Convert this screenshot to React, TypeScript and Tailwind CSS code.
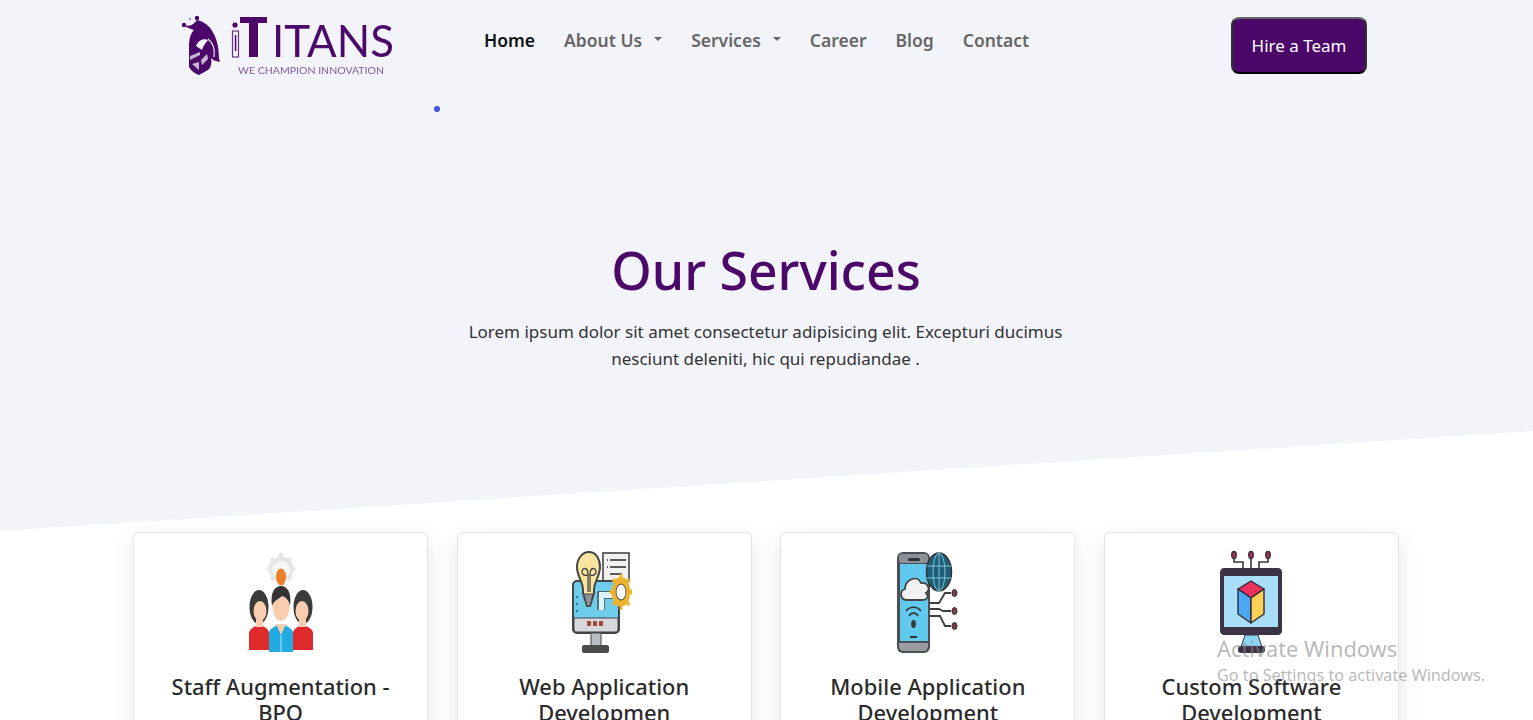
const font = "font-['Noto_Sans','Open_Sans',sans-serif]";

function Logo() {
  return (
    <svg viewBox="180 12 216 66" className="w-[216px] h-[66px] blur-[0.3px]">
      <g fill="#4b0869">
        <circle cx="184" cy="25" r="2.2" />
        <circle cx="197" cy="18" r="2.2" />
        <circle cx="190" cy="19" r="1.2" fill="#a98bbb" />
        <path d="M184 25 C190 27 193 25 197 20 C208 22 219 34 219 58 C219 60 220 61 220 62 C215 61 213 60 211 58 C212 62 211 68 208 70 L199 75 C196 74 192 72 189 67 L189 48 C189 40 190 34 194 30 C191 29 187 28 184 25 Z" />
      </g>
      <path d="M196 46 C198 41 203 38 208 40 C205 43 203 47 202 50 Z" fill="#f2f4fa" />
      <path d="M190 56 L200 52 L200 55 L190 60 Z M201 60 L207 54 L208 59 L202 65 Z M192 64 L199 62 L199 70 Z" fill="#c9b6d6" />
      <path d="M208 39 C213 43 215 50 214 57" fill="none" stroke="#f2f4fa" strokeWidth="1.2" />
      <circle cx="235" cy="25" r="2.6" fill="#4b0869" />
      <rect x="232.500" y="31" width="6" height="26" fill="none" stroke="#6b2e87" strokeWidth="1.2" />
      <rect x="234.800" y="35" width="1.500" height="16" fill="#4b0869" />
      <path d="M240 17 H267 V23 H258 V57 H249 V23 H240 Z" fill="#4b0869" />
      <text x="272" y="57" fontFamily="Lato,'Liberation Sans',sans-serif" fontSize="44" fontWeight="400" fill="#4b0869" textLength="122" lengthAdjust="spacingAndGlyphs">ITANS</text>
      <text x="238" y="74" fontFamily="Lato,'Noto Sans',sans-serif" fontSize="9.500" fill="#8559a0" textLength="146" lengthAdjust="spacingAndGlyphs">WE CHAMPION INNOVATION</text>
    </svg>
  );
}

function StaffIcon() {
  return (
    <svg viewBox="0 0 100 120" className="w-[100px] h-[120px] blur-[0.4px]">
      <circle cx="50" cy="29" r="12.500" fill="#e6e6e6" />
      <g stroke="#e6e6e6" strokeWidth="4.500">
        <path d="M50 13V45M36 29H64M40 18L60 40M60 18L40 40" />
      </g>
      <circle cx="50" cy="30" r="9" fill="#f6f6f6" />
      <ellipse cx="50" cy="37" rx="5" ry="8.500" fill="#ee7f2d" />
      <path d="M18 110 V92 C20 88 24 86 28 85 C33 86 36 88 38 92 V110 Z" fill="#e02a2c" />
      <path d="M62 110 V92 C64 88 67 86 72 85 C76 86 80 88 82 92 V110 Z" fill="#e02a2c" />
      <ellipse cx="28" cy="67" rx="9.500" ry="17" fill="#3a3a3a" />
      <ellipse cx="72" cy="67" rx="9.500" ry="17" fill="#3a3a3a" />
      <ellipse cx="29" cy="71" rx="6.500" ry="10" fill="#fbcdb0" />
      <ellipse cx="71" cy="71" rx="6.500" ry="10" fill="#fbcdb0" />
      <rect x="25" y="79" width="7" height="8" fill="#fbcdb0" />
      <rect x="68" y="79" width="7" height="8" fill="#fbcdb0" />
      <path d="M38 112 V92 C40 88 44 86 50 84 C56 86 60 88 62 92 V112 Z" fill="#22abe3" />
      <path d="M45 84 L50 95 L55 84 Z" fill="#fbcdb0" />
      <path d="M50 95 V112" stroke="#7fd4f2" strokeWidth="1.500" />
      <ellipse cx="50" cy="66" rx="8.500" ry="15" fill="#fbcdb0" />
      <path d="M41 66 C39 52 44 46 50 46 C56 46 61 52 59 66 C58 60 55 57 51 56 C48 59 43 60 41 66 Z" fill="#333" />
    </svg>
  );
}

function WebIcon() {
  return (
    <svg viewBox="0 0 100 120" className="w-[100px] h-[120px] blur-[0.4px]">
      <rect x="49" y="13" width="26" height="28" fill="#f2f2f2" stroke="#5a5a5a" strokeWidth="1.800" />
      <path d="M56 20H72M53 20H54M56 27H72M53 27H54M56 34H68" stroke="#5a5a5a" strokeWidth="1.800" />
      <rect x="19" y="41" width="46" height="52" rx="4" fill="#6fcdec" stroke="#444" strokeWidth="2" />
      <path d="M20 78H64V89C64 91 63 92 61 92H23C21 92 20 91 20 89Z" fill="#d6d8dc" stroke="#444" strokeWidth="1" />
      <rect x="33" y="81" width="4" height="5" fill="#a8453f" />
      <rect x="39" y="81" width="4" height="5" fill="#a8453f" />
      <rect x="45" y="81" width="4" height="5" fill="#a8453f" />
      <circle cx="23" cy="57" r="1.200" fill="#2c7a96" />
      <circle cx="23" cy="64" r="1.200" fill="#2c7a96" />
      <circle cx="23" cy="71" r="1.200" fill="#2c7a96" />
      <rect x="37" y="93" width="10" height="13" fill="#b9bcc2" stroke="#444" />
      <rect x="28" y="105" width="27" height="8" rx="2" fill="#4b4b4b" />
      <path d="M44 70 V52 H62 M50 70 V58 H62" fill="none" stroke="#444" strokeWidth="1.300" />
      <path d="M45 52 H62 V58 H50 V70 H45 Z" fill="#dff3fa" />
      <path d="M35 12 C42 12 46 19 46 27 C46 36 40 42 40 50 L40 53 L36 66 L33 66 L29 53 L29 50 C29 42 23 36 23 27 C23 19 28 12 35 12 Z" fill="#f9e4a0" stroke="#444" strokeWidth="2" />
      <path d="M30 54 H39 L36 66 H33 Z" fill="#8f9398" stroke="#444" />
      <path d="M34 52 V34 C34 27 28 27 28 32 C28 36 34 36 34 34 M36 52 V34 C36 27 42 27 42 32 C42 36 36 36 36 34" fill="none" stroke="#444" strokeWidth="1.300" />
      <g transform="translate(67 52) scale(0.62 1)">
        <circle r="15" fill="#eeb32e" />
        <g stroke="#eeb32e" strokeWidth="4.500">
          <path d="M0 -18V18M-18 0H18M-13 -13L13 13M13 -13L-13 13" />
        </g>
        <circle r="8" fill="#ffffff" stroke="#444" strokeWidth="1.200" />
      </g>
    </svg>
  );
}

function MobileIcon() {
  return (
    <svg viewBox="0 0 100 120" className="w-[100px] h-[120px] blur-[0.4px]">
      <rect x="19" y="12" width="33" height="101" rx="6" fill="#4c4f55" />
      <rect x="21" y="14" width="29" height="9" rx="3" fill="#8d9197" />
      <rect x="30" y="18" width="12" height="3" rx="1.500" fill="#2f3136" />
      <rect x="22" y="24" width="28" height="77" fill="#62c9ee" />
      <path d="M21 103H50V106C50 109 48 111 46 111H25C23 111 21 109 21 106Z" fill="#9a9ca1" />
      <path d="M29 60 C22 60 21 51 27 49 C27 40 39 34 43 43 C50 42 53 50 48 53 C52 57 48 60 45 60 Z" fill="#f2f2f4" stroke="#444" strokeWidth="1.800" />
      <path d="M28 71 C32 66 39 66 43 71 M31 76 C33 72 38 72 40 76" fill="none" stroke="#333" strokeWidth="1.600" />
      <ellipse cx="35.500" cy="84" rx="2.400" ry="4" fill="#3a3a3a" />
      <rect x="32" y="96" width="7" height="2" fill="#333" />
      <ellipse cx="61" cy="32" rx="12.500" ry="19" fill="#1f5f78" stroke="#333" strokeWidth="1.500" />
      <ellipse cx="61" cy="32" rx="6" ry="19" fill="none" stroke="#7ec3d9" />
      <path d="M61 13V51M49 26H73M49 38H73" stroke="#7ec3d9" />
      <g fill="none" stroke="#3d3d3d" strokeWidth="1.800">
        <path d="M52 63H61L67 53H73" />
        <path d="M52 69H61L65 71H73" />
        <path d="M52 76H62L67 86H73" />
      </g>
      <ellipse cx="76.500" cy="53" rx="2.500" ry="3.500" fill="#7a3b46" stroke="#333" />
      <ellipse cx="76.500" cy="71" rx="2.500" ry="3.500" fill="#7a3b46" stroke="#333" />
      <ellipse cx="76.500" cy="86" rx="2.500" ry="3.500" fill="#7a3b46" stroke="#333" />
    </svg>
  );
}

function SoftwareIcon() {
  return (
    <svg viewBox="0 0 100 120" className="w-[100px] h-[120px] blur-[0.4px]">
      <g fill="none" stroke="#3b3246" strokeWidth="1.600">
        <path d="M33 16V22H42V44" />
        <path d="M50 16V40" />
        <path d="M67 16V22H58V44" />
      </g>
      <ellipse cx="33" cy="15" rx="2.300" ry="3.500" fill="#a8324f" stroke="#3b3246" strokeWidth="1.300" />
      <ellipse cx="50" cy="15" rx="2.300" ry="3.500" fill="#a8324f" stroke="#3b3246" strokeWidth="1.300" />
      <ellipse cx="67" cy="15" rx="2.300" ry="3.500" fill="#a8324f" stroke="#3b3246" strokeWidth="1.300" />
      <path d="M19 32C19 30 21 28 23 28H77C79 28 81 30 81 32V91C81 93 79 95 77 95H23C21 95 19 93 19 91Z" fill="#3b3246" />
      <rect x="23" y="36" width="54" height="51" fill="#a9def8" />
      <path d="M44 95H57L61 107H40Z" fill="#8fd3f2" stroke="#3b3246" />
      <rect x="37" y="106" width="27" height="7" rx="3" fill="#3b3246" />
      <g stroke="#2f2a38" strokeWidth="1.400" strokeLinejoin="round">
        <path d="M50 41L63 49L50 58L37 49Z" fill="#e8325a" />
        <path d="M37 49L50 58V83L37 74Z" fill="#4aa9f2" />
        <path d="M63 49L50 58V83L63 74Z" fill="#fcd155" />
      </g>
    </svg>
  );
}

const services = [
  { title: "Staff Augmentation - BPO", icon: <StaffIcon /> },
  { title: "Web Application Developmen", icon: <WebIcon /> },
  { title: "Mobile Application Development", icon: <MobileIcon /> },
  { title: "Custom Software Development", icon: <SoftwareIcon /> },
];

function Caret() {
  return <span className="inline-block ml-[12px] mb-[3px] w-0 h-0 border-x-[4.500px] border-x-transparent border-t-[4.500px] border-t-[#666]" />;
}

export default function App() {
  return (
    <div className={`relative h-[720px] overflow-hidden bg-white ${font}`}>
      {/* Hero with slanted bottom */}
      <section className="h-[531px] bg-[#f2f4fa] [clip-path:polygon(0_0,100%_0,100%_431px,0_100%)]">
        <header className="flex items-center h-[90px] pl-[180px] pr-[166px]">
          <Logo />
          <nav className="ml-[88px] mb-[9px] flex items-center gap-[29px] text-[17.500px] font-semibold text-[#666]">
            <span className="text-[#111]">Home</span>
            <span className="flex items-center">About Us<Caret /></span>
            <span className="flex items-center">Services<Caret /></span>
            <span>Career</span>
            <span>Blog</span>
            <span>Contact</span>
          </nav>
          <button className="ml-auto pt-px w-[136px] h-[57px] rounded-[8px] bg-[#4b0869] text-white text-[17px] border-2 border-t-[#666] border-x-[#333] border-b-black">
            Hire a Team
          </button>
        </header>
        <div className="ml-[434px] mt-[16px] w-[6px] h-[6px] rounded-full bg-[#4353d8]" />
        <div className="mt-[127px] text-center">
          <h1 className="pr-px text-[51.700px] leading-[62px] font-medium text-[#4b0869]">Our Services</h1>
          <p className="mt-[17px] pr-[2px] mx-auto w-[620px] text-[17px] leading-[27px] text-[#333]">
            Lorem ipsum dolor sit amet consectetur adipisicing elit. Excepturi ducimus nesciunt deleniti, hic qui repudiandae .
          </p>
        </div>
      </section>

      {/* Service cards */}
      <section className="grid grid-cols-4 gap-[28.500px] pl-[133px] pr-[134px] pt-px">
        {services.map((s) => (
          <div key={s.title} className="h-[300px] rounded-[6px] border border-[#e6e6e6] bg-white shadow-[0_6px_22px_rgba(0,0,0,0.10)] flex flex-col items-center pt-[7px]">
            {s.icon}
            <h3 className="mt-[14px] w-[240px] text-center text-[21.900px] leading-[26px] font-medium text-[#2b2b2b]">{s.title}</h3>
          </div>
        ))}
      </section>

      {/* Windows watermark */}
      <div className="absolute left-[1217px] top-[634px] text-[#8a8a8a]/60 pointer-events-none">
        <div className="text-[21.800px] leading-[30px]">Activate Windows</div>
        <div className="text-[16.200px] leading-[22px]">Go to Settings to activate Windows.</div>
      </div>
    </div>
  );
}
